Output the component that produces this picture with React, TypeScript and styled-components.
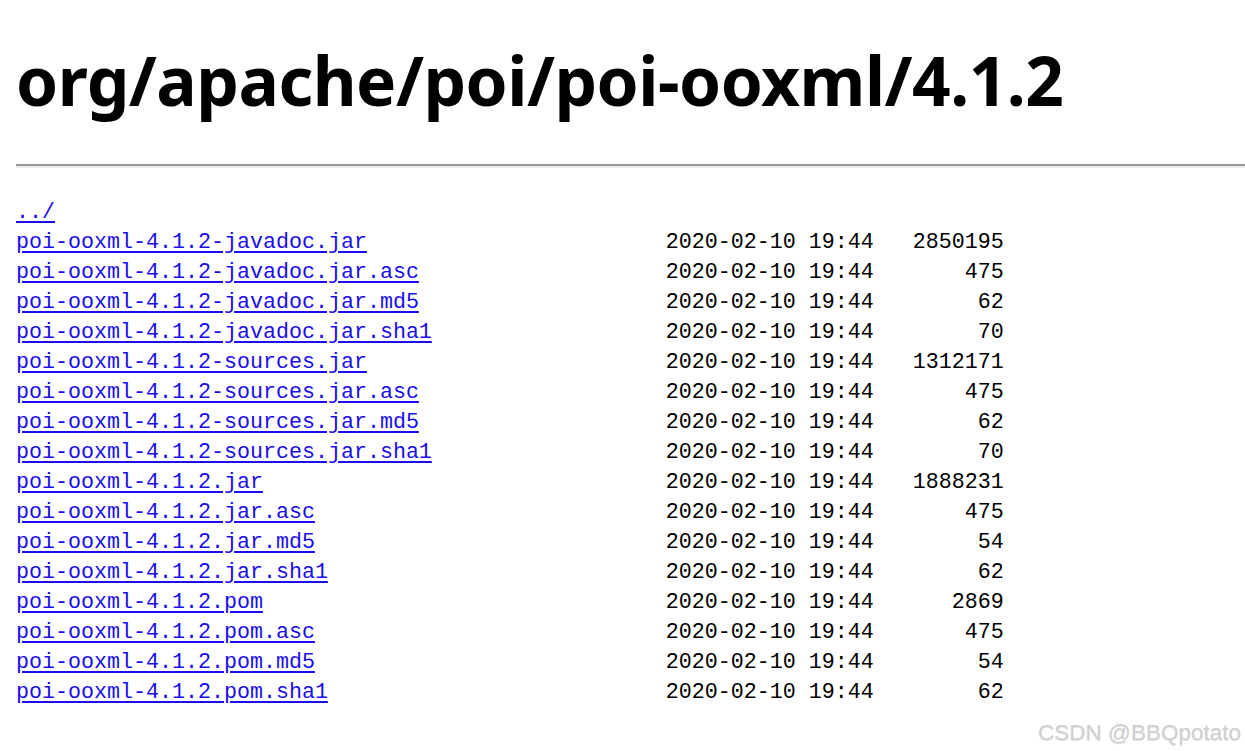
import styled, { createGlobalStyle } from "styled-components";

const GlobalStyle = createGlobalStyle`
  html, body {
    margin: 0;
    padding: 0;
    background: #fff;
  }
  body {
    padding: 0 0 0 16px;
    overflow: hidden;
  }
`;

type Entry = { name: string; date?: string; size?: string };

const entries: Entry[] = [
  { name: "../" },
  { name: "poi-ooxml-4.1.2-javadoc.jar", date: "2020-02-10 19:44", size: "2850195" },
  { name: "poi-ooxml-4.1.2-javadoc.jar.asc", date: "2020-02-10 19:44", size: "475" },
  { name: "poi-ooxml-4.1.2-javadoc.jar.md5", date: "2020-02-10 19:44", size: "62" },
  { name: "poi-ooxml-4.1.2-javadoc.jar.sha1", date: "2020-02-10 19:44", size: "70" },
  { name: "poi-ooxml-4.1.2-sources.jar", date: "2020-02-10 19:44", size: "1312171" },
  { name: "poi-ooxml-4.1.2-sources.jar.asc", date: "2020-02-10 19:44", size: "475" },
  { name: "poi-ooxml-4.1.2-sources.jar.md5", date: "2020-02-10 19:44", size: "62" },
  { name: "poi-ooxml-4.1.2-sources.jar.sha1", date: "2020-02-10 19:44", size: "70" },
  { name: "poi-ooxml-4.1.2.jar", date: "2020-02-10 19:44", size: "1888231" },
  { name: "poi-ooxml-4.1.2.jar.asc", date: "2020-02-10 19:44", size: "475" },
  { name: "poi-ooxml-4.1.2.jar.md5", date: "2020-02-10 19:44", size: "54" },
  { name: "poi-ooxml-4.1.2.jar.sha1", date: "2020-02-10 19:44", size: "62" },
  { name: "poi-ooxml-4.1.2.pom", date: "2020-02-10 19:44", size: "2869" },
  { name: "poi-ooxml-4.1.2.pom.asc", date: "2020-02-10 19:44", size: "475" },
  { name: "poi-ooxml-4.1.2.pom.md5", date: "2020-02-10 19:44", size: "54" },
  { name: "poi-ooxml-4.1.2.pom.sha1", date: "2020-02-10 19:44", size: "62" },
];

function App() {
  return (
    <Page>
      <GlobalStyle />
      <Title>org/apache/poi/poi-ooxml/4.1.2</Title>
      <Rule />
      <Listing>
        {entries.map((e) => (
          <Row key={e.name}>
            <Name href="#">{e.name}</Name>
            <Date>{e.date}</Date>
            <Size>{e.size}</Size>
          </Row>
        ))}
      </Listing>
      <Watermark>CSDN @BBQpotato</Watermark>
    </Page>
  );
}

const Page = styled.div`
  position: relative;
  height: 751px;
  padding-top: 30px;
  box-sizing: border-box;
`;

const Title = styled.h1`
  margin: 0;
  font-family: "Noto Sans", "Open Sans", sans-serif;
  font-weight: 700;
  font-size: 67.5px;
  line-height: 100px;
  color: #000;
  letter-spacing: -0.5px;
`;

const Rule = styled.hr`
  margin: 34px 0 0 0;
  height: 0;
  border: none;
  border-top: 2px solid #9a9a9a;
  border-bottom: 2px solid #eeeeee;
`;

const Listing = styled.div`
  margin-top: 30px;
  font-family: "Liberation Mono", "DejaVu Sans Mono", monospace;
  font-size: 21.67px;
  line-height: 30px;
`;

const Row = styled.div`
  display: grid;
  grid-template-columns: 50ch 16ch 10ch;
  height: 30px;
  white-space: pre;
`;

const Name = styled.a`
  color: #1a0dee;
  text-decoration: underline;
  text-underline-offset: 3px;
  justify-self: start;
`;

const Date = styled.span`
  color: #000;
`;

const Size = styled.span`
  color: #000;
  text-align: right;
`;

const Watermark = styled.div`
  position: absolute;
  right: 4px;
  bottom: 5px;
  font-family: "Liberation Sans", Arial, sans-serif;
  font-size: 22.5px;
  color: #d0d0d0;
  text-shadow: 0 1px 1px rgba(0, 0, 0, 0.12);
`;

export default App;
